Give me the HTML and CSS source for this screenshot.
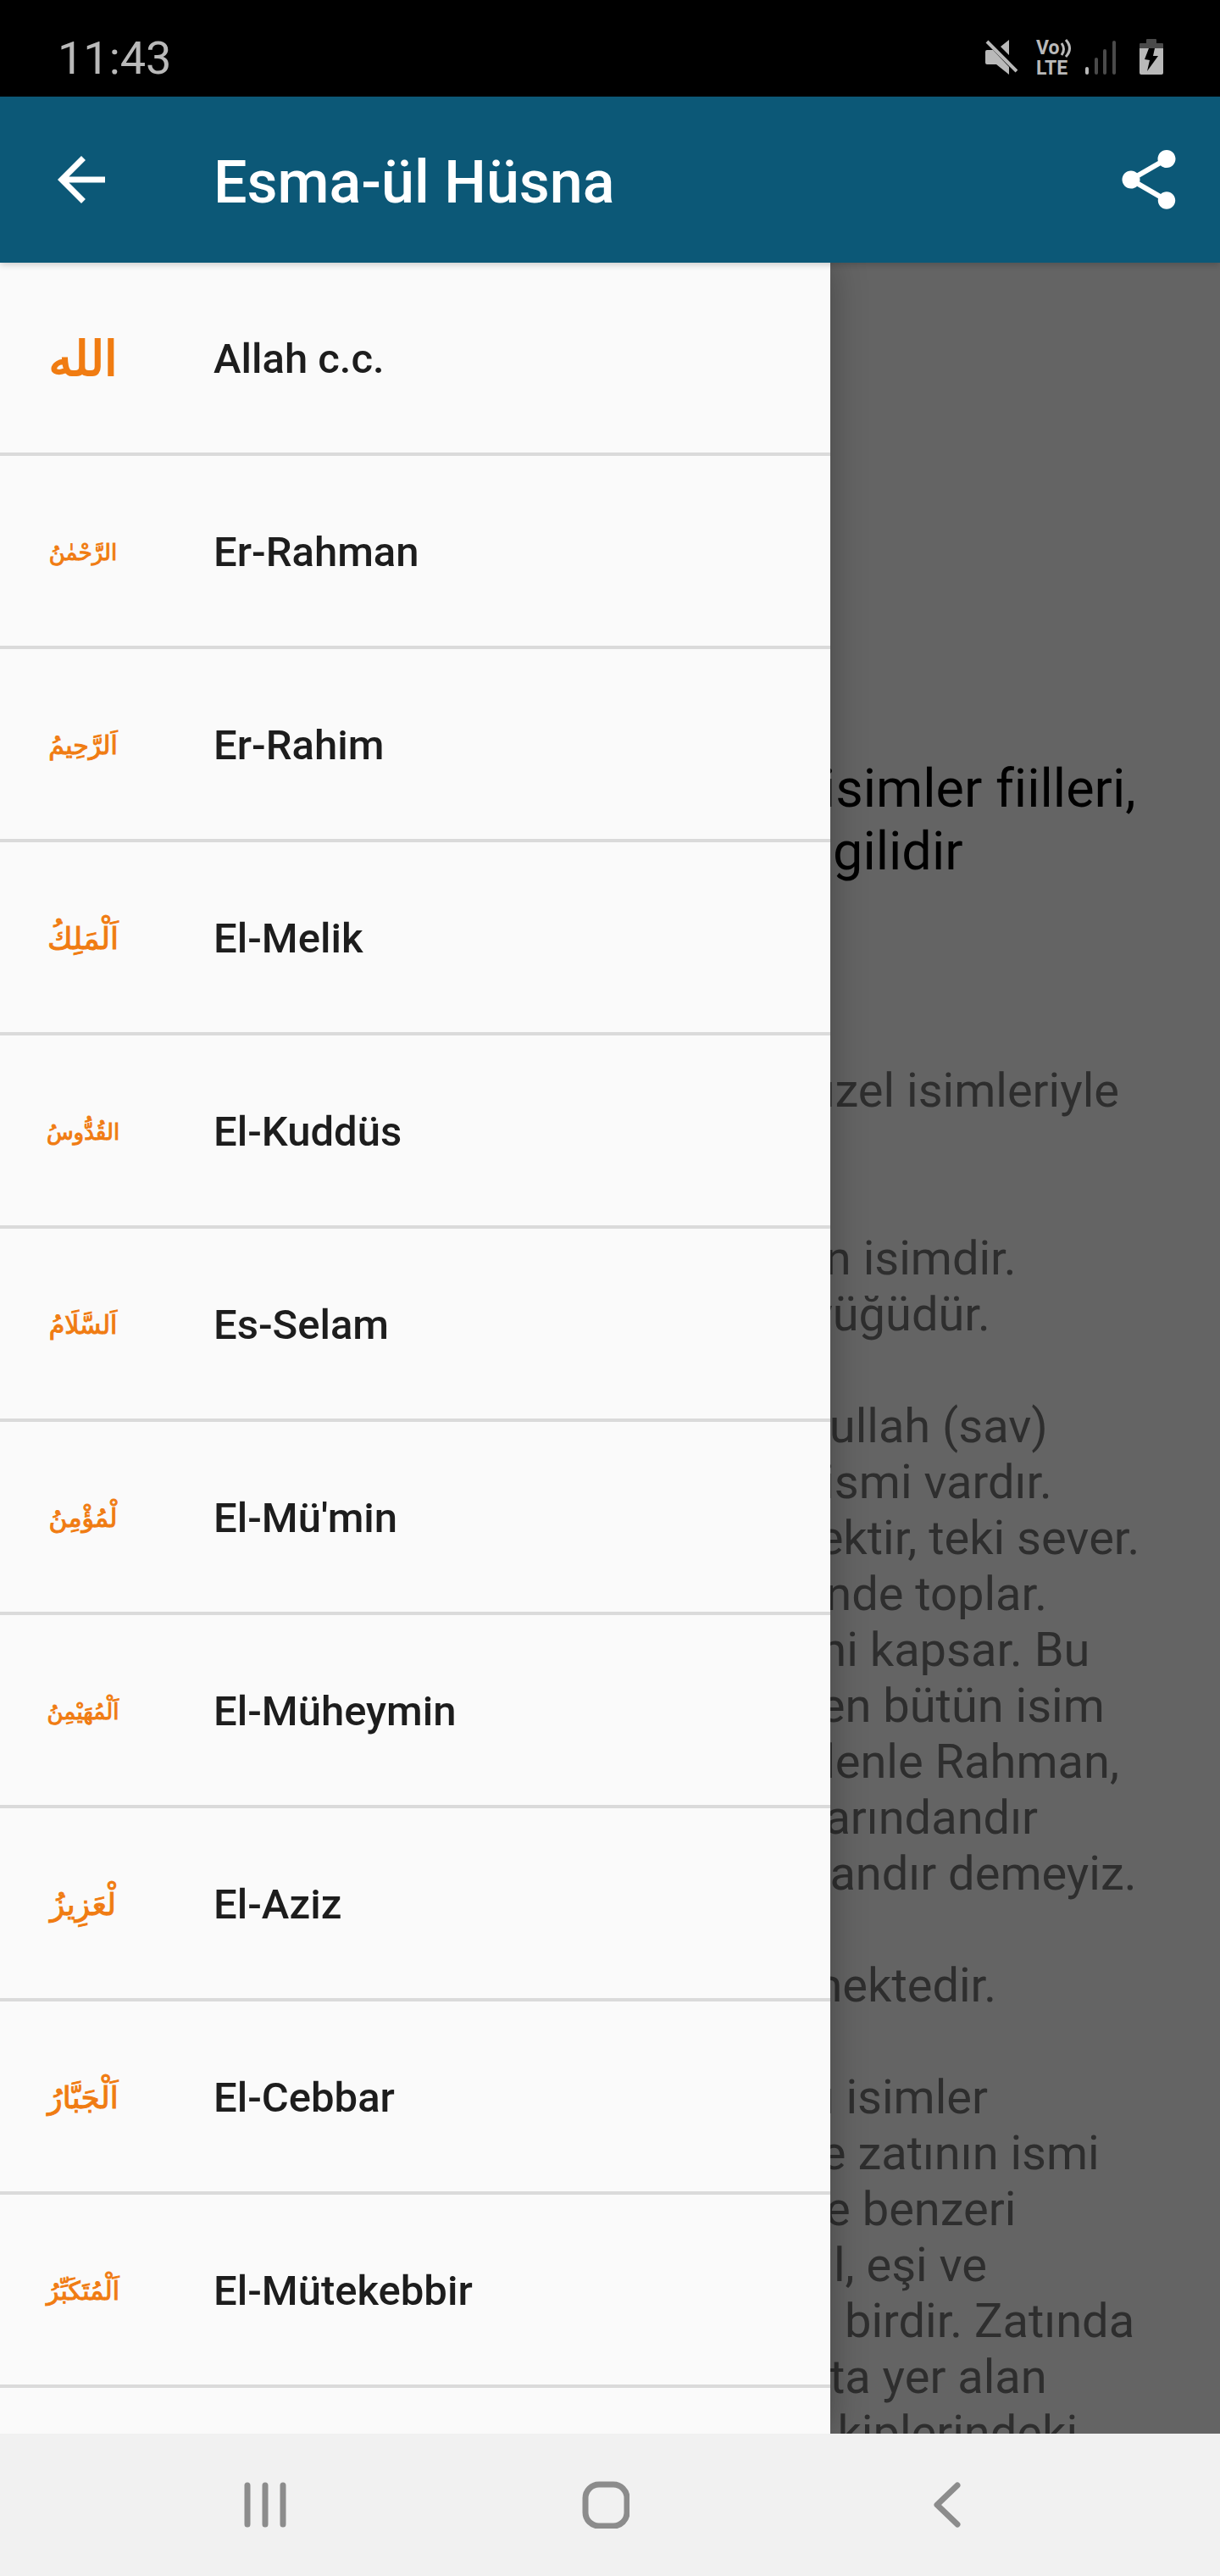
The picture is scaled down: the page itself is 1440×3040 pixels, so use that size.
FILE: index.html
```
<!DOCTYPE html>
<html lang="tr">
	<head>
		<meta charset="utf-8">
		<meta name="viewport" content="width=device-width, initial-scale=1"/>
		<link rel="stylesheet" href="styles.css">
		<title>Esma-ül Hüsna</title>
	</head>
	<body>
		<div class="status">
			<span class="clock">11:43</span>
			<svg class="mute" width="38" height="42" viewBox="0 0 38 42">
				<path d="M0 15q0-2 2-2h7l19 20v9L13 30H2q-2 0-2-2zM28 1v18L18 9z"/>
				<path d="M2 3l35 35" stroke="#b9b9b9" stroke-width="4"/>
			</svg>
			<svg class="volte" width="42" height="42" viewBox="0 0 42 42">
				<text x="0" y="18" font-size="23">Vo</text>
				<text x="0" y="42" font-size="23">LTE</text>
				<path d="M30 5q5 7 0 14M35 1q9 10 0 20" fill="none" stroke="#b9b9b9" stroke-width="3"/>
			</svg>
			<svg class="signal" width="36" height="42" viewBox="0 0 36 42">
				<rect x="0" y="33" width="4" height="9" rx="2"/>
				<g fill="#4a4a4a">
					<rect x="11" y="22" width="4" height="20" rx="2"/>
					<rect x="21" y="12" width="4" height="30" rx="2"/>
					<rect x="32" y="2" width="4" height="40" rx="2"/>
				</g>
			</svg>
			<svg class="battery" width="28" height="42" viewBox="0 0 28 42">
				<path d="M8 1q0-1 1-1h10q1 0 1 1v4h7q1 0 1 1v5H0V6q0-1 1-1h7z" fill="#4a4a4a"/>
				<path d="M0 11h28v29q0 2-2 2H2q-2 0-2-2z"/>
				<path d="M11 11L6 24l6 1-3 13 13-18h-6l2-9z" fill="#000"/>
			</svg>
		</div>
		<header class="bar">
			<button type="button" aria-label="Geri">
				<svg width="84" height="84" viewBox="0 0 24 24"><path d="M20 11H7.830l5.590-5.590L12 4l-8 8 8 8 1.410-1.410L7.830 13H20v-2z"/></svg>
			</button>
			<h1>Esma-ül Hüsna</h1>
			<button type="button" aria-label="Paylaş">
				<svg width="84" height="84" viewBox="0 0 24 24"><path d="M18 16.080c-.76 0-1.440.3-1.960.77L8.910 12.700c.05-.23.09-.46.09-.7s-.04-.47-.09-.7l7.050-4.110c.54.5 1.250.81 2.040.81 1.660 0 3-1.340 3-3s-1.340-3-3-3-3 1.340-3 3c0 .24.04.47.09.7L8.040 9.810C7.500 9.310 6.790 9 6 9c-1.660 0-3 1.340-3 3s1.340 3 3 3c.79 0 1.500-.31 2.040-.81l7.120 4.160c-.05.21-.08.43-.08.65 0 1.610 1.310 2.920 2.920 2.920s2.920-1.310 2.920-2.920-1.310-2.920-2.920-2.920z"/></svg>
			</button>
		</header>
		<main>
			<article>
				<h2>daha çok isimler fiilleri,<br>çok olan ilgilidir</h2>
				<p class="far">isim gibi güzel isimleriyle</p>
				<p>bu ise bütün isimdir.<br>ve hem büyüğüdür.</p>
				<p>ve ile Resulullah (sav)<br>bütün diye ismi vardır.<br>her vardır tektir, teki sever.<br>ile güzel içinde toplar.<br>bir ki hepsini kapsar. Bu<br>bu yüce eden bütün isim<br>sadece nedenle Rahman,<br>her zatı adlarındandır<br>bir adlarındandır demeyiz.</p>
				<p>ki ise bilinmektedir.</p>
				<p>için olan bu isimler<br>çok onun ve zatının ismi<br>her vardır ve benzeri<br>bu için değil, eşi ve<br>ve hiç Allah birdir. Zatında<br>ki ile kainatta yer alan<br>yüze adı ve kiplerindeki</p>
			</article>
			<div class="scrim"></div>
			<!-- open drawer -->
			<nav class="drawer">
				<a href="#allah"><span class="ar xl" lang="ar">الله</span>Allah c.c.</a>
				<a href="#rahman"><span class="ar s" lang="ar">الرَّحْمٰنُ</span>Er-Rahman</a>
				<a href="#rahim"><span class="ar" lang="ar">اَلرَّحِيمُ</span>Er-Rahim</a>
				<a href="#melik"><span class="ar l" lang="ar">اَلْمَلِكُ</span>El-Melik</a>
				<a href="#kuddus"><span class="ar s" lang="ar">القُدُّوسُ</span>El-Kuddüs</a>
				<a href="#selam"><span class="ar" lang="ar">اَلسَّلَامُ</span>Es-Selam</a>
				<a href="#mumin"><span class="ar" lang="ar">لْمُؤْمِنُ</span>El-Mü'min</a>
				<a href="#muheymin"><span class="ar s" lang="ar">اَلْمُهَيْمِنُ</span>El-Müheymin</a>
				<a href="#aziz"><span class="ar l" lang="ar">لْعَزِيزُ</span>El-Aziz</a>
				<a href="#cebbar"><span class="ar l" lang="ar">اَلْجَبَّارُ</span>El-Cebbar</a>
				<a href="#mutekebbir"><span class="ar" lang="ar">اَلْمُتَكَبِّرُ</span>El-Mütekebbir</a>
			</nav>
		</main>
		<footer class="keys">
			<button type="button" aria-label="Son uygulamalar">
				<svg width="56" height="56" viewBox="0 0 56 56"><path d="M7 5v46M28 5v46M49 5v46"/></svg>
			</button>
			<button type="button" aria-label="Ana ekran">
				<svg width="56" height="56" viewBox="0 0 56 56"><rect x="4" y="4" width="49" height="49" rx="16"/></svg>
			</button>
			<button type="button" aria-label="Geri">
				<svg width="56" height="56" viewBox="0 0 56 56"><path d="M40 5L16 28l24 23"/></svg>
			</button>
		</footer>
	</body>
</html>
```
FILE: styles.css
```
*{box-sizing:border-box;}
body{
	margin:0;height:100vh;
	display:flex;flex-direction:column;
	background:#fafafa;
	font-family:Roboto,sans-serif;
}
svg{display:block;flex:none;}
button{border:0;padding:0;background:none;}
h1,h2,p{margin:0;font-weight:400;}

.status{
	height:114px;flex:none;
	display:flex;align-items:center;
	padding:20px 67px 0 68px;
	background:#000;color:#b9b9b9;fill:#b9b9b9;
}
.clock{font-size:54px;line-height:64px;padding-top:4px;margin-right:auto;}
.volte{margin:0 16px 0 22px;font-weight:700;overflow:visible;}
.battery{margin-left:28px;}

.bar{
	height:196px;flex:none;
	display:flex;align-items:center;
	padding:0 42px 0 54px;
	background:#0c5877;color:#fff;fill:#fff;
	position:relative;z-index:1;
	box-shadow:0 2px 8px rgba(0,0,0,.2);
}
.bar h1{
	flex:1;
	padding:6px 0 0 114px;
	font-size:70px;line-height:82px;font-weight:500;
}

main{flex:1;min-height:0;position:relative;overflow:hidden;}
article{
	padding:584px 0 0 700px;
	white-space:nowrap;
	font-size:56px;line-height:66px;color:#737373;
}
article h2{font-size:63px;line-height:74px;color:#000;margin-bottom:212px;}
article p{margin-bottom:66px;}
article .far{margin-bottom:132px;}
.scrim{position:absolute;top:0;right:0;bottom:0;left:0;background:rgba(0,0,0,.6);}

.drawer{
	position:absolute;top:0;bottom:0;left:0;
	width:980px;max-width:100%;
	background:#fafafa;
	box-shadow:0 0 40px rgba(0,0,0,.3);
}
.drawer a{
	height:228px;
	display:flex;align-items:center;
	padding:4px 0 0 56px;
	border-bottom:4px solid #dadada;
	font-size:49px;font-weight:500;line-height:58px;
	color:#1d1d1d;text-decoration:none;
}
.ar{
	width:84px;margin-right:112px;
	display:flex;justify-content:center;
	font:30px/80px "DejaVu Sans",sans-serif;
	white-space:nowrap;direction:rtl;
	color:#f07c12;
	-webkit-text-stroke:1px #f07c12;
}
.ar.s{font-size:26px;}
.ar.l{font-size:36px;}
.ar.xl{font-size:56px;-webkit-text-stroke-width:2px;}

.keys{
	height:168px;flex:none;
	display:grid;grid-template-columns:1fr 1fr 1fr;
	align-items:center;justify-items:center;
	padding:0 121px 0 112px;
	background:#f1f1f1;
}
.keys svg{fill:none;stroke:#8c8c8c;stroke-width:7;stroke-linecap:round;stroke-linejoin:round;}
```
